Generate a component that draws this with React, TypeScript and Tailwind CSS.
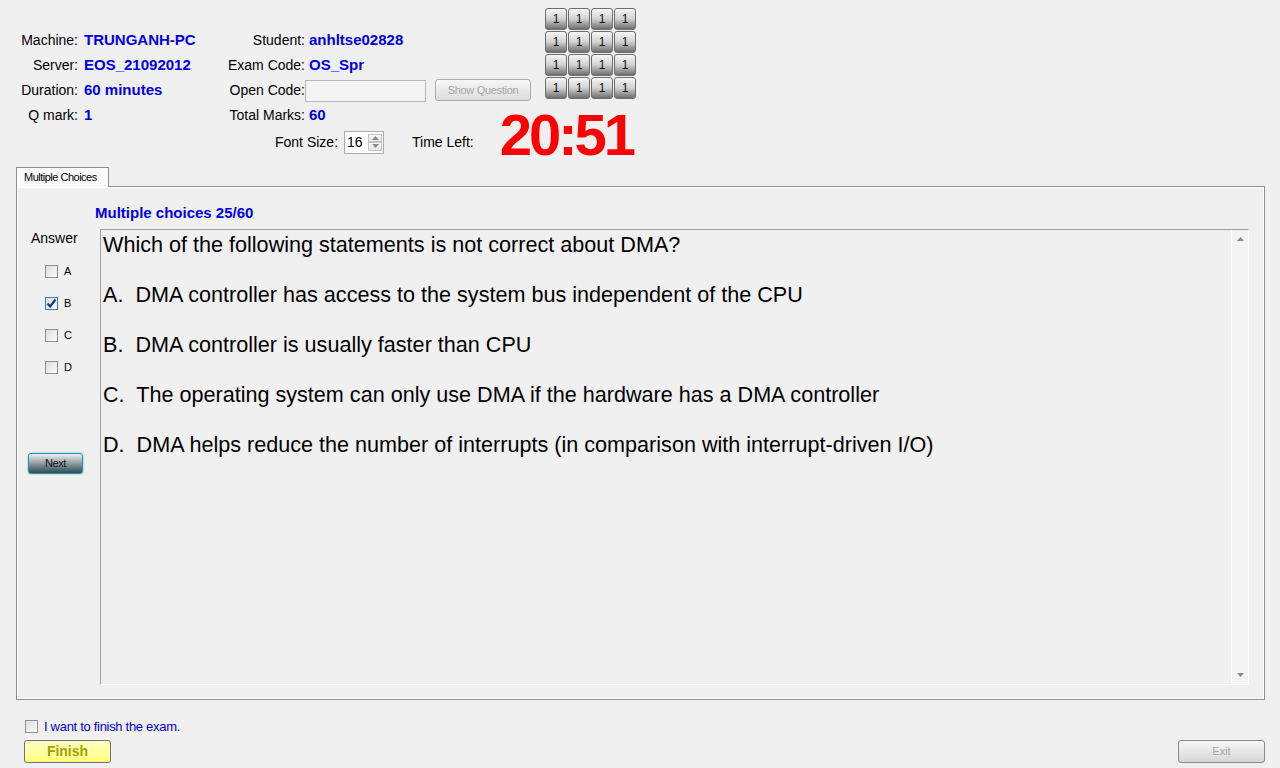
const leftInfo = [
  { label: "Machine:", value: "TRUNGANH-PC" },
  { label: "Server:", value: "EOS_21092012" },
  { label: "Duration:", value: "60 minutes" },
  { label: "Q mark:", value: "1" },
];

const questionLines = [
  "Which of the following statements is not correct about DMA?",
  "A.  DMA controller has access to the system bus independent of the CPU",
  "B.  DMA controller is usually faster than CPU",
  "C.  The operating system can only use DMA if the hardware has a DMA controller",
  "D.  DMA helps reduce the number of interrupts (in comparison with interrupt-driven I/O)",
];

function CheckBox({ checked = false }: { checked?: boolean }) {
  return (
    <div
      className={
        "w-[13px] h-[13px] border bg-linear-to-br from-[#dcdcdc] to-[#fbfbfb] flex items-center justify-center " +
        (checked ? "border-[#3c7fb1]" : "border-[#8f8f8f]")
      }
    >
      {checked && (
        <svg width="11" height="11" viewBox="0 0 11 11">
          <path d="M1.5 5.5 L4.2 8.5 L9.5 1.5" stroke="#1c3a78" strokeWidth="2.2" fill="none" />
        </svg>
      )}
    </div>
  );
}

function Arrow({ up }: { up?: boolean }) {
  return (
    <svg width="7" height="4" viewBox="0 0 7 4">
      <path d={up ? "M0 4 L3.5 0 L7 4 Z" : "M0 0 L3.5 4 L7 0 Z"} fill="#8a8a8a" />
    </svg>
  );
}

export default function App() {
  return (
    <div className="w-[1280px] h-[768px] overflow-hidden bg-[#f0f0f0] text-black font-['Liberation_Sans',Arial,sans-serif]">
      {/* header */}
      <div className="flex h-[128px]">
        <div className="w-[78px] pt-[28px] flex flex-col items-end text-[14px]">
          {leftInfo.map((r) => (
            <div key={r.label} className="h-[25px] flex items-center">{r.label}</div>
          ))}
        </div>
        <div className="w-[116px] ml-[6px] pt-[28px] flex flex-col text-[15px] font-bold text-[#0000e6]">
          {leftInfo.map((r) => (
            <div key={r.label} className="h-[25px] flex items-center whitespace-nowrap">{r.value}</div>
          ))}
        </div>
        <div className="w-[105px] pt-[28px] flex flex-col items-end text-[14px]">
          <div className="h-[25px] flex items-center">Student:</div>
          <div className="h-[25px] flex items-center">Exam Code:</div>
          <div className="h-[25px] flex items-center">Open Code:</div>
          <div className="h-[25px] flex items-center">Total Marks:</div>
        </div>
        <div className="w-[130px] pt-[28px] flex flex-col text-[15px] font-bold text-[#0000e6]">
          <div className="h-[25px] flex items-center pl-[4px]">anhltse02828</div>
          <div className="h-[25px] flex items-center pl-[4px]">OS_Spr</div>
          <div className="h-[25px] flex items-center">
            <div className="w-[121px] h-[22px] border border-[#b5b7bd] bg-[#f4f4f4]" />
          </div>
          <div className="h-[25px] flex items-center pl-[4px]">60</div>
        </div>
        <div className="w-[110px] pt-[79px]">
          <div className="w-[96px] h-[22px] rounded-[3px] border border-[#adadad] bg-linear-to-b from-[#f7f7f7] to-[#dcdcdc] flex items-center justify-center text-[11px] text-[#a6a6a6] tracking-[-0.3px]">
            Show Question
          </div>
        </div>
        <div className="pt-[8px]">
          <div className="grid grid-cols-4 gap-[1px]">
            {Array.from({ length: 16 }).map((_, i) => (
              <div
                key={i}
                className="w-[22px] h-[22px] rounded-[3px] border border-[#6d6d6d] bg-linear-to-b from-[#f6f6f6] via-[#d2d2d2] to-[#6f6f6f] flex items-center justify-center text-[12px] text-[#111]"
              >
                1
              </div>
            ))}
          </div>
        </div>
      </div>

      {/* font size / time left */}
      <div className="flex items-center h-[28px] pl-[275px] text-[14px]">
        <span>Font Size:</span>
        <div className="ml-[6px] w-[40px] h-[23px] border border-[#abadb3] bg-white flex">
          <div className="flex-1 flex items-center pl-[2px]">16</div>
          <div className="w-[15px] flex flex-col py-[2px] pr-[1px]">
            <div className="flex-1 border border-[#c4c4c4] bg-linear-to-b from-[#fafafa] to-[#e4e4e4] flex items-center justify-center">
              <Arrow up />
            </div>
            <div className="flex-1 border border-[#c4c4c4] bg-linear-to-b from-[#fafafa] to-[#e4e4e4] flex items-center justify-center">
              <Arrow />
            </div>
          </div>
        </div>
        <span className="ml-[28px]">Time Left:</span>
        <span className="ml-[26px] mb-[14px] text-[58px] leading-none font-bold tracking-[-3px] text-[#ff0000]">
          20:51
        </span>
      </div>

      {/* tab */}
      <div className="mt-[11px] ml-[16px] w-[93px] h-[20px] border border-b-0 border-[#8e8f8f] bg-[#fbfbfb] relative z-10 -mb-px flex items-center pl-[7px] text-[11px] tracking-[-0.5px]">
        Multiple Choices
      </div>
      <div className="ml-[16px] w-[1249px] h-[514px] border border-[#8e8f8f] shadow-[inset_1px_1px_0_#ffffff,inset_-1px_-1px_0_#ffffff]">
        <div className="pt-[18px] pl-[78px] h-[34px] text-[15px] leading-[16px] font-bold text-[#0000e6]">
          Multiple choices 25/60
        </div>
        <div className="flex mt-[8px]">
          <div className="w-[83px] flex flex-col">
            <div className="mt-[1px] pl-[14px] h-[16px] text-[14px] leading-[16px]">Answer</div>
            <div className="mt-[9px] flex flex-col">
              {["A", "B", "C", "D"].map((l) => (
                <div key={l} className="h-[32px] pl-[28px] flex items-center">
                  <CheckBox checked={l === "B"} />
                  <span className="ml-[6px] text-[11px]">{l}</span>
                </div>
              ))}
            </div>
            <div className="mt-[70px] ml-[11px] w-[55px] h-[21px] rounded-[3px] border border-[#2e8ea6] shadow-[0_0_2px_#41c2e0] bg-linear-to-b from-[#eef3f4] via-[#8e9ca1] to-[#2f4c55] flex items-center justify-center text-[11px] text-[#111] tracking-[-0.4px]">
              Next
            </div>
          </div>
          <div className="w-[1149px] h-[456px] border-t border-l border-[#a0a0a0] border-b-white border-r-white border-b border-r flex">
            <div className="flex-1 pt-[2px] pl-[2px] text-[21.6px] whitespace-pre">
              {questionLines.map((line, i) => (
                <div key={i}>
                  {i > 0 && <div className="h-[25px]" />}
                  <div className="h-[25px] leading-[25px]">{line}</div>
                </div>
              ))}
            </div>
            <div className="w-[17px] border-l border-white flex flex-col items-center justify-between py-[7px] bg-[#f3f3f3]">
              <Arrow up />
              <Arrow />
            </div>
          </div>
        </div>
      </div>

      {/* bottom */}
      <div className="mt-[20px] pl-[25px] flex items-center h-[13px]">
        <CheckBox />
        <span className="ml-[6px] text-[13px] tracking-[-0.3px] text-[#0000cc]">I want to finish the exam.</span>
      </div>
      <div className="mt-[7px] pl-[24px] pr-[15px] flex justify-between">
        <div className="w-[87px] h-[23px] rounded-[3px] border border-[#707070] bg-linear-to-b from-[#ffffc4] to-[#ffff7a] flex items-center justify-center text-[14px] font-bold text-[#a39f00]">
          Finish
        </div>
        <div className="w-[87px] h-[23px] rounded-[3px] border border-[#8a8a8a] bg-linear-to-b from-[#f7f7f7] to-[#d6d6d6] flex items-center justify-center text-[11px] text-[#a6a6a6]">
          Exit
        </div>
      </div>
    </div>
  );
}
